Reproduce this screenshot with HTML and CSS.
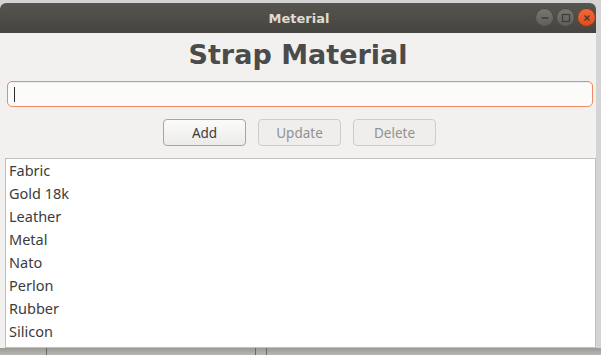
FILE: index.html
```html
<!DOCTYPE html>
<html>
<head>
    <meta charset="UTF-8">
    <title>Meterial</title>
    <link rel="stylesheet" href="styles.css">
</head>
<body>
    <div class="Desk">
        <div class="Window">
            <div class="TitleBar">
                <span class="TitleText">Meterial</span>
                <div class="WinButtons">
                    <span class="WinBtn MinBtn">
                        <svg width="16" height="16" viewBox="0 0 16 16"><line x1="4.5" y1="8" x2="11.5" y2="8" stroke="#3c3b37" stroke-width="1.4"/></svg>
                    </span>
                    <span class="WinBtn MaxBtn">
                        <svg width="16" height="16" viewBox="0 0 16 16"><rect x="4.5" y="4.5" width="7" height="7" fill="none" stroke="#3c3b37" stroke-width="1.2"/></svg>
                    </span>
                    <span class="WinBtn CloseBtn">
                        <svg width="16" height="16" viewBox="0 0 16 16"><path d="M5.5 5.5 L10.5 10.5 M10.5 5.5 L5.5 10.5" stroke="#3c3b37" stroke-width="1.3"/></svg>
                    </span>
                </div>
            </div>
            <div class="Content">
                <h1 class="Heading">Strap Material</h1>
                <div class="EntryBox"><span class="Caret"></span></div>
                <div class="ButtonRow">
                    <button class="Btn">Add</button>
                    <button class="Btn Disabled">Update</button>
                    <button class="Btn Disabled">Delete</button>
                </div>
                <ul class="ItemList">
                    <li>Fabric</li>
                    <li>Gold 18k</li>
                    <li>Leather</li>
                    <li>Metal</li>
                    <li>Nato</li>
                    <li>Perlon</li>
                    <li>Rubber</li>
                    <li>Silicon</li>
                </ul>
            </div>
        </div>
        <div class="BehindStrip">
            <span class="Seg Seg1"></span>
            <span class="Seg Seg2"></span>
            <span class="Seg Seg3"></span>
        </div>
    </div>
</body>
</html>
```
FILE: styles.css
```css
body {
    margin: 0;
    background: #d4d4d4;
    font-family: "Noto Sans", "DejaVu Sans", sans-serif;
    overflow: hidden;
}

.Desk {
    width: 601px;
    height: 355px;
    padding-top: 3px;
    box-sizing: border-box;
    position: relative;
}

.Window {
    width: 596px;
    height: 345px;
    background: #f2f1f0;
    border-radius: 6px 6px 0 0;
    overflow: hidden;
    display: flex;
    flex-direction: column;
}

.TitleBar {
    height: 30px;
    flex: none;
    background: linear-gradient(#57554f, #46443f);
    display: flex;
    align-items: center;
    justify-content: center;
    position: relative;
}

.TitleText {
    color: #dfdbd2;
    font-family: "DejaVu Sans", sans-serif;
    font-weight: bold;
    font-size: 13px;
    margin-left: 2px;
}

.WinButtons {
    position: absolute;
    right: 0;
    top: 5px;
    display: flex;
    gap: 2px;
}

.WinBtn {
    width: 19px;
    height: 19px;
    border-radius: 50%;
    display: flex;
    align-items: center;
    justify-content: center;
    background: linear-gradient(#7a7873, #5f5d58);
    box-shadow: inset 0 0 0 1px #46443f;
}

.CloseBtn {
    background: linear-gradient(#f26b3a, #e0491b);
}

.Content {
    flex: 1;
    display: flex;
    flex-direction: column;
    padding: 0 0 0 5px;
}

.Heading {
    margin: 4px 0 0;
    text-align: center;
    font-family: "DejaVu Sans", sans-serif;
    font-weight: bold;
    font-size: 27px;
    line-height: 36px;
    color: #4b4b4b;
    padding-right: 5px;
}

.EntryBox {
    margin: 8px 3px 0 2px;
    height: 24px;
    border: 1px solid #ee8a66;
    border-radius: 5px;
    background: #fbfbfa;
    box-shadow: inset 0 1px 1px rgba(0, 0, 0, 0.06);
    display: flex;
    align-items: center;
    padding-left: 6px;
}

.Caret {
    width: 1px;
    height: 15px;
    background: #2e2e2e;
}

.ButtonRow {
    display: flex;
    justify-content: center;
    gap: 12px;
    margin-top: 12px;
    padding-right: 5px;
    margin-left: 3px;
}

.Btn {
    width: 83px;
    height: 27px;
    border: 1px solid #a9a59e;
    border-radius: 4px;
    background: linear-gradient(#fbfbfa, #ecebe9);
    font-family: "Noto Sans", sans-serif;
    font-size: 13.5px;
    color: #3c3c3c;
    padding: 0;
}

.Btn.Disabled {
    border-color: #cfcbc6;
    background: #efeeec;
    color: #8f9192;
}

.ItemList {
    list-style: none;
    margin: 12px 0 0;
    padding: 0;
    width: 591px;
    height: 190px;
    box-sizing: border-box;
    background: #ffffff;
    border: 1px solid #c3bfba;
}

.ItemList li {
    height: 23px;
    line-height: 23px;
    padding-left: 3px;
    font-size: 14.5px;
    color: #3c3c3c;
}

.BehindStrip {
    height: 7px;
    background: linear-gradient(#9c9a96, #b8b6b2);
    position: relative;
}

.Seg {
    position: absolute;
    top: 0;
    width: 1px;
    height: 7px;
    background: #6a6864;
}

.Seg1 { left: 46px; }
.Seg2 { left: 255px; }
.Seg3 { left: 266px; }
```
